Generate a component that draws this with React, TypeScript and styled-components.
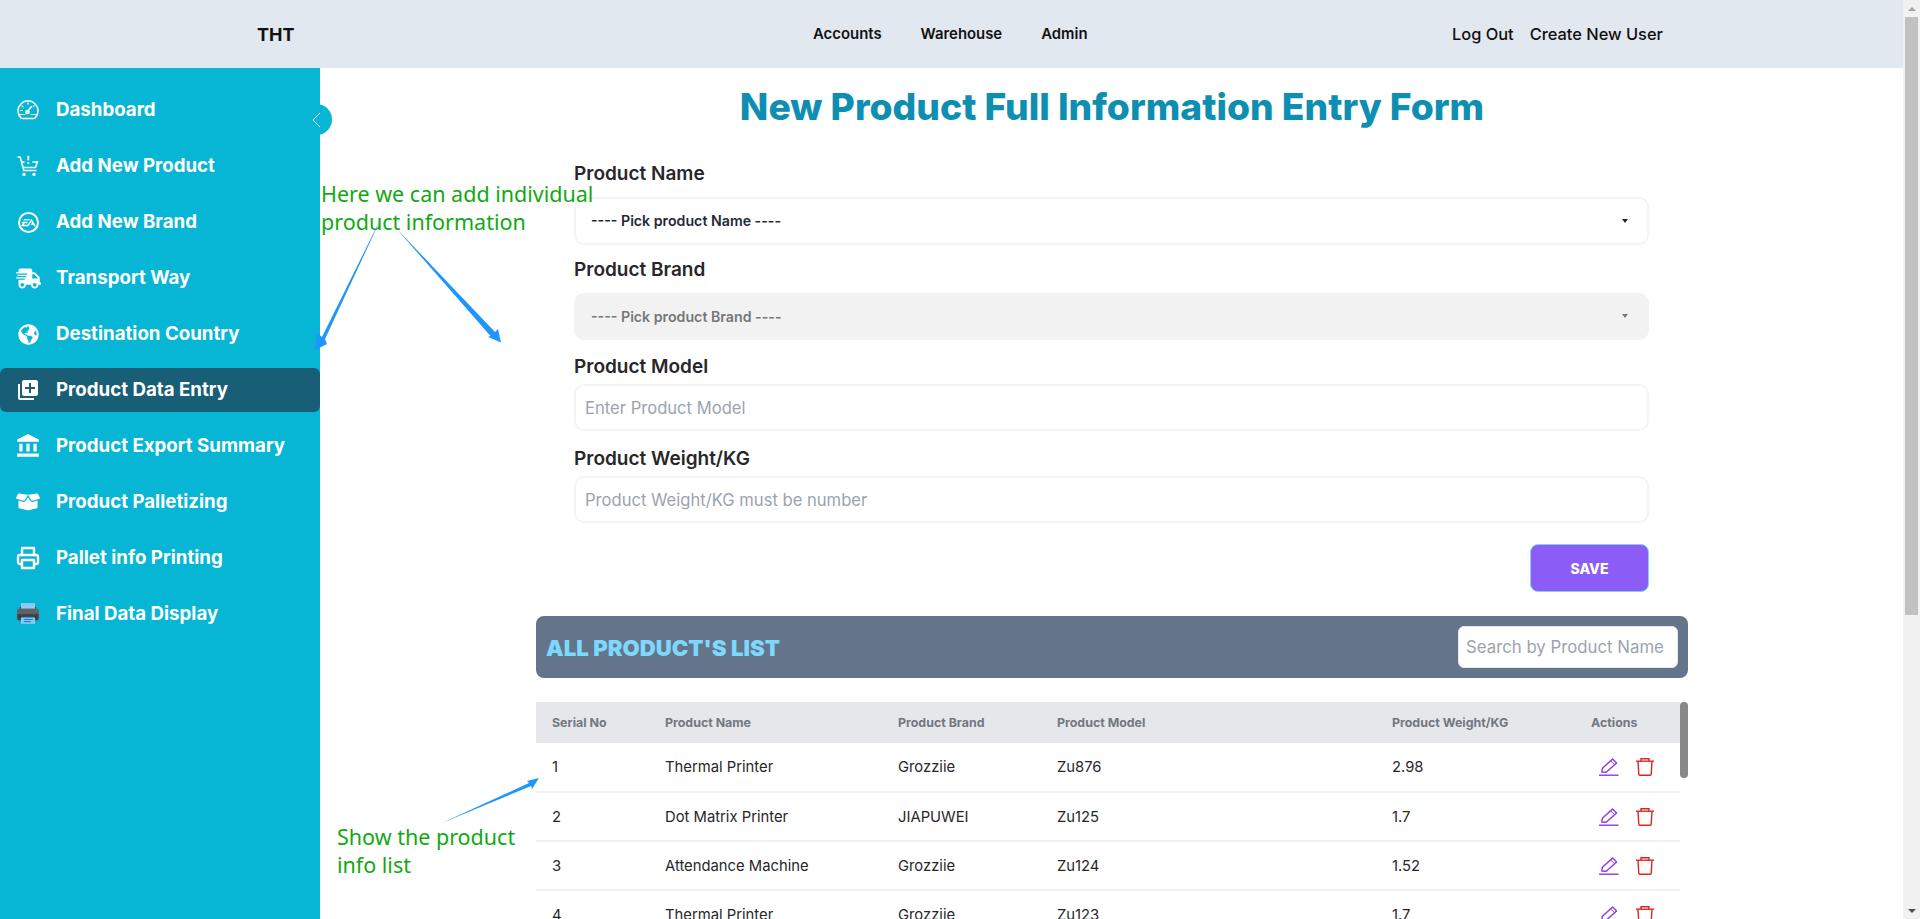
import React from 'react';
import styled, { createGlobalStyle } from 'styled-components';
import { SiEa } from 'react-icons/si';
import { FaShippingFast, FaGlobeAmericas, FaBoxOpen } from 'react-icons/fa';
import { MdLibraryAdd, MdAccountBalance } from 'react-icons/md';
import { FiPrinter } from 'react-icons/fi';
import { FcPrint } from 'react-icons/fc';

const Global = createGlobalStyle`
  * { box-sizing: border-box; }
  html, body { height: 100%; overflow: hidden; }
  body { margin: 0; background: #fff; font-family: Inter, "Liberation Sans", sans-serif; color: #1f2937; }
`;

const Shell = styled.div`height: 100vh; display: flex; position: relative; overflow: hidden;`;
const Content = styled.div`flex: 1; min-width: 0; display: flex; flex-direction: column;`;
const Rail = styled.div`width: 17px; flex: none; background: #f1f1f1; display: flex; flex-direction: column; align-items: center;`;
const RailArrow = styled.div<{ $down?: boolean }>`
  height: 17px; width: 17px; flex: none; display: flex; align-items: center; justify-content: center;
  &::before {
    content: ''; width: 0; height: 0; border-left: 4px solid transparent; border-right: 4px solid transparent;
    ${p => (p.$down ? 'border-top: 4px solid #505050;' : 'border-bottom: 4px solid #a3a3a3;')}
  }
`;
const RailThumb = styled.div`width: 13px; height: 598px; background: #c1c1c1; flex: none;`;
const RailGap = styled.div`flex: 1;`;

const TopBar = styled.header`
  height: 68px; background: #e2e8f0; display: grid; grid-template-columns: 813px 639px 1fr; align-items: center; flex: none;
`;
const Brand = styled.div`font-weight: 700; font-size: 18px; color: #111; padding-left: 257px;`;
const CenterNav = styled.nav`display: flex; gap: 39px; font-weight: 600; font-size: 14.9px; color: #111;`;
const RightNav = styled.nav`display: flex; gap: 16px; font-weight: 500; font-size: 16.4px; color: #111;`;
const Body = styled.div`display: flex; flex: 1; min-height: 0;`;
const Sidebar = styled.aside`width: 320px; background: #06b6d4; padding-top: 20px; flex: none; position: relative;`;
const Toggle = styled.div`
  position: absolute; top: 36px; right: -12px; width: 24px; height: 31px; border-radius: 0 16px 16px 0;
  background: #06b6d4; display: flex; align-items: center; padding-left: 4px; color: #fff;
`;
const NavItem = styled.div<{ $active?: boolean }>`
  height: 44px; margin-bottom: 12px; display: flex; align-items: center; gap: 17px; padding-left: 17px;
  color: #fff; font-weight: 700; font-size: 18.7px; border-radius: 6px;
  background: ${p => (p.$active ? '#175e76' : 'transparent')};
`;
const NavLabel = styled.span`margin-top: -2px;`;
const IconSlot = styled.span<{ $size?: number }>`
  width: 22px; height: 22px; flex: none; display: flex; align-items: center; justify-content: center;
  svg { width: ${p => p.$size ?? 22}px; height: ${p => p.$size ?? 22}px; flex: none; }
`;
const EaBadge = styled.span`
  width: 21px; height: 21px; border-radius: 50%; border: 2px solid #fff; display: flex; align-items: center; justify-content: center;
  && svg { width: 15px; height: 15px; }
`;
const Main = styled.main`flex: 1; padding: 0 215px 0 216px; min-width: 0;`;
const Title = styled.h1`margin: 14px 0 0; font-size: 37.25px; line-height: 50px; font-weight: 800; color: #0e8fb1; text-align: center; white-space: nowrap;`;
const Form = styled.form`margin: 0 39px 0 38px; padding-top: 28px;`;
const Label = styled.label<{ $before?: number; $after: number }>`
  display: block; font-size: 19px; font-weight: 600; line-height: 28px; color: #27272a;
  padding-top: ${p => p.$before ?? 0}px; margin-bottom: ${p => p.$after}px;
`;
const SelectField = styled.div<{ $disabled?: boolean }>`
  height: 47.5px; margin-bottom: 11px; border-radius: 10px; padding: 0 15px; display: flex; align-items: center; justify-content: space-between;
  border: 2px solid ${p => (p.$disabled ? '#f2f2f2' : '#f3f4f6')};
  background: ${p => (p.$disabled ? '#f2f2f2' : '#fff')};
  font-size: 14.2px; font-weight: 600;
  color: ${p => (p.$disabled ? '#777' : '#1f2937')};
`;
const Caret = styled.span<{ $disabled?: boolean }>`
  width: 0; height: 0; border-left: 3.5px solid transparent; border-right: 3.5px solid transparent;
  border-top: 4px solid ${p => (p.$disabled ? '#777' : '#222')}; margin-right: 4px;
`;
const TextField = styled.div`
  height: 47px; margin-bottom: 12px; border-radius: 10px; padding: 0 9px; display: flex; align-items: center;
  border: 2px solid #f3f4f6; background: #fff; font-size: 16.6px; color: #9ca3af;
`;
const Actions = styled.div`display: flex; justify-content: flex-end; margin-top: 21px;`;
const SaveBtn = styled.button`
  width: 119px; height: 48px; background: #8b5cf6; border: 1px solid #7dd3fc; border-radius: 8px; color: #fff; font: 800 14px Inter, sans-serif;
`;
const ListHead = styled.div`
  margin-top: 24px; height: 62px; background: #64748b; border-radius: 8px; display: flex; align-items: center; justify-content: space-between; padding: 0 10px;
`;
const ListTitle = styled.h2`margin: 0; font-size: 22.2px; font-weight: 900; color: #7dd8fb;`;
const Search = styled.input`
  width: 220px; height: 42px; border: 1px solid #e5e7eb; border-radius: 6px; padding: 0 7px; font: 400 16.8px Inter, sans-serif;
  &::placeholder { color: #9ca3af; }
`;
const TableArea = styled.div`margin-top: 24px; display: flex; align-items: flex-start;`;
const Table = styled.table`flex: 1; width: 1144px; border-collapse: collapse; table-layout: fixed;`;
const TableThumb = styled.div`width: 8px; height: 76px; background: #888; border-radius: 4px; flex: none;`;
const Th = styled.th<{ $w: number }>`
  width: ${p => p.$w}px; height: 41px; background: #e5e7eb; text-align: left; font-size: 12.4px; font-weight: 700; color: #737780; padding: 0 0 0 16px;
`;
const Td = styled.td`height: 49px; border-bottom: 2px solid #f0f1f3; font-size: 14.8px; color: #27272a; padding: 0 0 0 16px;`;
const IconRow = styled.div`display: flex; gap: 17px; padding-left: 8px; align-items: center;`;
const Note = styled.div<{ $x: number; $y: number; $w: number }>`
  position: absolute; left: ${p => p.$x}px; top: ${p => p.$y}px; width: ${p => p.$w}px;
  font-family: "Noto Sans", sans-serif; font-size: 21.5px; line-height: 28px; color: #13a813;
`;
const Arrows = styled.svg`position: absolute; left: 0; top: 0; pointer-events: none;`;

const GaugeIcon = () => (
  <svg viewBox="0 0 22 22" fill="none" stroke="currentColor" strokeWidth="1.5" strokeLinecap="round">
    <path d="M3.6 18.6a10 10 0 1 1 14.8 0q-.8 1-2 1H5.6q-1.2 0-2-1z" />
    <path d="M2.5 15.5H8M14 15.5h5.5" strokeWidth="1.2" />
    <path d="M10 13l4.5-5.5" />
    <path d="M11 3.8v1.4M5 6.8l1 1M3.8 11.5h1.4M17 6.8l-.6.6" strokeWidth="1.2" />
    <circle cx="10.5" cy="13" r="1.6" />
  </svg>
);
const CartIcon = () => (
  <svg viewBox="0 0 22 22" fill="none" stroke="currentColor" strokeWidth="1.5" strokeLinecap="round">
    <path d="M1 2h2.2l3.6 13.5h12" />
    <path d="M4.5 7H7M16 7h4.5l-2 5.5H6.2" />
    <path d="M11.3 0.8v4.6" strokeWidth="1.8" strokeLinecap="butt" />
    <path d="M11.3 7.2v1.8" strokeWidth="1.8" strokeLinecap="butt" />
    <circle cx="7" cy="19.4" r="1.7" fill="currentColor" stroke="none" />
    <circle cx="17" cy="19.4" r="1.7" fill="currentColor" stroke="none" />
  </svg>
);
const Chevron = () => (
  <svg width="9" height="16" viewBox="0 0 9 16" fill="none" stroke="currentColor" strokeWidth="1"><path d="M8 1 1 8l7 7" /></svg>
);
const EditIcon = () => (
  <svg width="20" height="18" viewBox="0 0 20 18" fill="none" stroke="#9333ea" strokeWidth="1.4">
    <path d="M2.8 14 3.4 10.2 13.6 1l4 4L7.2 14.2z" strokeLinejoin="round" />
    <path d="M11.6 2.8l4 4" strokeWidth="1" />
    <path d="M0 17.2h19.5" />
  </svg>
);
const TrashIcon = () => (
  <svg width="18" height="18" viewBox="0 0 18 18" fill="none" stroke="#dc2626" strokeWidth="1.4">
    <path d="M0 3.2h18" />
    <path d="M2 3.2l.8 13a1 1 0 0 0 1 1h10.4a1 1 0 0 0 1-1l.8-13" strokeLinejoin="round" />
    <path d="M5 3.2V.7h8v2.5" />
  </svg>
);

const nav = [
  { t: 'Dashboard', i: <GaugeIcon /> },
  { t: 'Add New Product', i: <CartIcon /> },
  { t: 'Add New Brand', i: <EaBadge><SiEa /></EaBadge> },
  { t: 'Transport Way', i: <FaShippingFast />, s: 25 },
  { t: 'Destination Country', i: <FaGlobeAmericas />, s: 21 },
  { t: 'Product Data Entry', i: <MdLibraryAdd />, active: true, s: 24 },
  { t: 'Product Export Summary', i: <MdAccountBalance />, s: 26 },
  { t: 'Product Palletizing', i: <FaBoxOpen />, s: 24 },
  { t: 'Pallet info Printing', i: <FiPrinter strokeWidth={2.4} />, s: 24 },
  { t: 'Final Data Display', i: <FcPrint />, s: 26 },
];
const rows = [
  ['Thermal Printer', 'Grozziie', 'Zu876', '2.98'],
  ['Dot Matrix Printer', 'JIAPUWEI', 'Zu125', '1.7'],
  ['Attendance Machine', 'Grozziie', 'Zu124', '1.52'],
  ['Thermal Printer', 'Grozziie', 'Zu123', '1.7'],
];
const cols = [{ t: 'Serial No', w: 113 }, { t: 'Product Name', w: 233 }, { t: 'Product Brand', w: 159 }, { t: 'Product Model', w: 335 }, { t: 'Product Weight/KG', w: 199 }, { t: 'Actions', w: 105 }];

export default function App() {
  return (
    <Shell>
      <Global />
      <Content>
        <TopBar>
          <Brand>THT</Brand>
          <CenterNav><span>Accounts</span><span>Warehouse</span><span>Admin</span></CenterNav>
          <RightNav><span>Log Out</span><span>Create New User</span></RightNav>
        </TopBar>
        <Body>
          <Sidebar>
            <Toggle><Chevron /></Toggle>
            {nav.map(n => (
              <NavItem key={n.t} $active={n.active}>
                <IconSlot $size={n.s}>{n.i}</IconSlot>
                <NavLabel>{n.t}</NavLabel>
              </NavItem>
            ))}
          </Sidebar>
          <Main>
            <Title>New Product Full Information Entry Form</Title>
            <Form>
              <Label $after={9}>Product Name</Label>
              <SelectField><span>---- Pick product Name ----</span><Caret /></SelectField>
              <Label $after={9}>Product Brand</Label>
              <SelectField $disabled><span>---- Pick product Brand ----</span><Caret $disabled /></SelectField>
              <Label $before={2} $after={3}>Product Model</Label>
              <TextField>Enter Product Model</TextField>
              <Label $before={2} $after={3}>Product Weight/KG</Label>
              <TextField>Product Weight/KG must be number</TextField>
              <Actions><SaveBtn type="button">SAVE</SaveBtn></Actions>
            </Form>
            <ListHead>
              <ListTitle>ALL PRODUCT'S LIST</ListTitle>
              <Search placeholder="Search by Product Name" />
            </ListHead>
            <TableArea>
              <Table>
                <thead><tr>{cols.map(c => <Th key={c.t} $w={c.w}>{c.t}</Th>)}</tr></thead>
                <tbody>
                  {rows.map((r, i) => (
                    <tr key={i}>
                      <Td>{i + 1}</Td>{r.map((v, j) => <Td key={j}>{v}</Td>)}
                      <Td><IconRow><EditIcon /><TrashIcon /></IconRow></Td>
                    </tr>
                  ))}
                </tbody>
              </Table>
              <TableThumb />
            </TableArea>
          </Main>
        </Body>
      </Content>
      <Rail>
        <RailArrow />
        <RailThumb />
        <RailGap />
        <RailArrow $down />
      </Rail>
      <Note $x={321} $y={180} $w={300}>Here we can add individual product information</Note>
      <Note $x={337} $y={823} $w={200}>Show the product info list</Note>
      <Arrows width="600" height="919" viewBox="0 0 600 919" fill="#1e96fc">
        <path d="M385 210 L322 337 L317 333 L315 350 L327 344 L325 339 Z" />
        <path d="M395 227 L490.5 336 L488 337 L501 342.5 L498 329 L495 332 Z" />
        <path d="M442 823 L529 783 L527 781 L539 778 L532 789 L531 786 Z" />
      </Arrows>
    </Shell>
  );
}
